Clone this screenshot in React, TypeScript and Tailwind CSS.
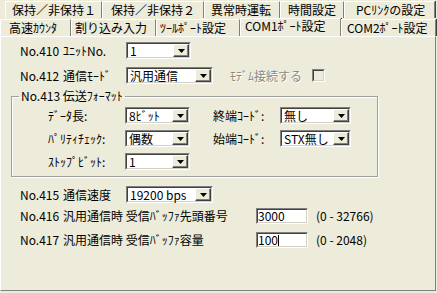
import React from "react";

function Arrow() {
  return (
    <svg width="7" height="4" viewBox="0 0 7 4">
      <path d="M0 0h7L3.5 4z" fill="#000" />
    </svg>
  );
}

function Combo({ w, value }: { w: string; value: string }) {
  return (
    <div className={`${w} h-[17px] flex border border-t-[#808080] border-l-[#808080] border-b-white border-r-white`}>
      <div className="flex-1 flex items-center border border-t-[#404040] border-l-[#404040] border-b-[#d4d0c8] border-r-[#d4d0c8] bg-white">
        <span className="flex-1 pl-[2px] leading-[13px] text-[12px] whitespace-nowrap">{value}</span>
        <div className="w-[16px] h-full bg-[#edebd9] flex items-center justify-center border border-t-white border-l-white border-b-[#404040] border-r-[#404040] shadow-[inset_-1px_-1px_0_#808080]">
          <Arrow />
        </div>
      </div>
    </div>
  );
}

function Field({ value, caret }: { value: string; caret?: boolean }) {
  return (
    <div className="w-[52px] h-[16px] flex border border-t-[#808080] border-l-[#808080] border-b-white border-r-white">
      <div className="flex-1 flex items-center border border-t-[#404040] border-l-[#404040] border-b-[#d4d0c8] border-r-[#d4d0c8] bg-white">
        <span className="leading-[12px] text-[12px]">{value}</span>
        {caret && <span className="w-[1px] h-[11px] bg-black" />}
      </div>
    </div>
  );
}

function Tab({ w, pl, label }: { w: string; pl: string; label: string }) {
  return (
    <div className={`${w} ${pl} h-full flex items-start whitespace-nowrap border-r border-r-[#808080] shadow-[1px_0_0_#404040] border-l border-l-white border-t border-t-white`}>
      <span className="mt-[1px] leading-[14px]">{label}</span>
    </div>
  );
}

export default function App() {
  return (
    <div className="w-[437px] h-[293px] bg-[#edebd9] text-black text-[12px] font-['Noto_Sans_CJK_JP','Noto_Sans',sans-serif] overflow-hidden">
      {/* Tab row 1 */}
      <div className="h-[18px] flex pl-[5px] pt-[1px]">
        <Tab w="w-[97px]" pl="pl-[6px]" label="保持／非保持１" />
        <Tab w="w-[102px]" pl="pl-[8px]" label="保持／非保持２" />
        <Tab w="w-[76px]" pl="pl-[6px]" label="異常時運転" />
        <Tab w="w-[64px]" pl="pl-[7px]" label="時間設定" />
        <Tab w="w-[91px]" pl="pl-[11px]" label="PCﾘﾝｸの設定" />
      </div>
      {/* Tab row 2 */}
      <div className="h-[18px] flex pt-[1px]">
        <Tab w="w-[71px]" pl="pl-[8px]" label="高速ｶｳﾝﾀ" />
        <Tab w="w-[85px]" pl="pl-[3px]" label="割り込み入力" />
        <Tab w="w-[84px]" pl="pl-[3px]" label="ﾂｰﾙﾎﾟｰﾄ設定" />
        <div className="w-[101px] h-[18px] -mt-[1px] pl-[4px] flex items-start whitespace-nowrap border-r border-r-[#808080] shadow-[1px_0_0_#404040] border-l border-l-white border-t border-t-white bg-[#edebd9]">
          <span className="leading-[14px]">COM1ﾎﾟｰﾄ設定</span>
        </div>
        <Tab w="w-[95px]" pl="pl-[5px]" label="COM2ﾎﾟｰﾄ設定" />
      </div>
      {/* Panel */}
      <div className="w-[436px] h-[255px] border-t border-l border-t-white border-l-white border-r border-b border-r-[#808080] border-b-[#808080] flex flex-col">
        <div className="mt-[5px] h-[17px] flex items-center">
          <span className="pl-[19px] w-[62px]">No.410</span>
          <span className="w-[63px]">ﾕﾆｯﾄNo.</span>
          <Combo w="w-[65px]" value="1" />
        </div>
        <div className="mt-[8px] h-[17px] flex items-center">
          <span className="pl-[19px] w-[62px]">No.412</span>
          <span className="w-[63px]">通信ﾓｰﾄﾞ</span>
          <Combo w="w-[87px]" value="汎用通信" />
          <span className="ml-[17px] text-[#8a8a80] [text-shadow:1px_1px_0_#fff]">ﾓﾃﾞﾑ接続する</span>
          <div className="ml-[10px] w-[13px] h-[13px] border border-t-[#808080] border-l-[#808080] border-b-white border-r-white">
            <div className="w-full h-full border border-t-[#404040] border-l-[#404040] border-b-[#d4d0c8] border-r-[#d4d0c8]" />
          </div>
        </div>
        <fieldset className="mt-[6px] ml-[10px] w-[367px] border border-[#a0a0a0] shadow-[1px_1px_0_#fff,inset_1px_1px_0_#fff] pt-[5px] pb-[6px] flex flex-col gap-[6px]">
          <legend className="ml-[7px] px-[2px] leading-[12px]">No.413 伝送ﾌｫｰﾏｯﾄ</legend>
          <div className="h-[17px] flex items-center">
            <span className="pl-[36px] w-[113px]">ﾃﾞｰﾀ長:</span>
            <Combo w="w-[65px]" value="8ﾋﾞｯﾄ" />
            <span className="ml-[23px] w-[67px]">終端ｺｰﾄﾞ:</span>
            <Combo w="w-[71px]" value="無し" />
          </div>
          <div className="h-[17px] flex items-center">
            <span className="pl-[36px] w-[113px]">ﾊﾟﾘﾃｨﾁｪｯｸ:</span>
            <Combo w="w-[65px]" value="偶数" />
            <span className="ml-[23px] w-[67px]">始端ｺｰﾄﾞ:</span>
            <Combo w="w-[71px]" value="STX無し" />
          </div>
          <div className="h-[17px] flex items-center">
            <span className="pl-[36px] w-[113px]">ｽﾄｯﾌﾟﾋﾞｯﾄ:</span>
            <Combo w="w-[65px]" value="1" />
          </div>
        </fieldset>
        <div className="mt-[9px] h-[17px] flex items-center">
          <span className="pl-[19px] w-[62px]">No.415</span>
          <span className="w-[63px]">通信速度</span>
          <Combo w="w-[87px]" value="19200 bps" />
        </div>
        <div className="mt-[5px] h-[16px] flex items-center">
          <span className="pl-[19px] w-[62px]">No.416</span>
          <span className="w-[193px] whitespace-nowrap">汎用通信時 受信ﾊﾞｯﾌｧ先頭番号</span>
          <Field value="3000" />
          <span className="ml-[8px]">(0 - 32766)</span>
        </div>
        <div className="mt-[8px] h-[16px] flex items-center">
          <span className="pl-[19px] w-[62px]">No.417</span>
          <span className="w-[193px] whitespace-nowrap">汎用通信時 受信ﾊﾞｯﾌｧ容量</span>
          <Field value="100" caret />
          <span className="ml-[8px]">(0 - 2048)</span>
        </div>
      </div>
    </div>
  );
}
